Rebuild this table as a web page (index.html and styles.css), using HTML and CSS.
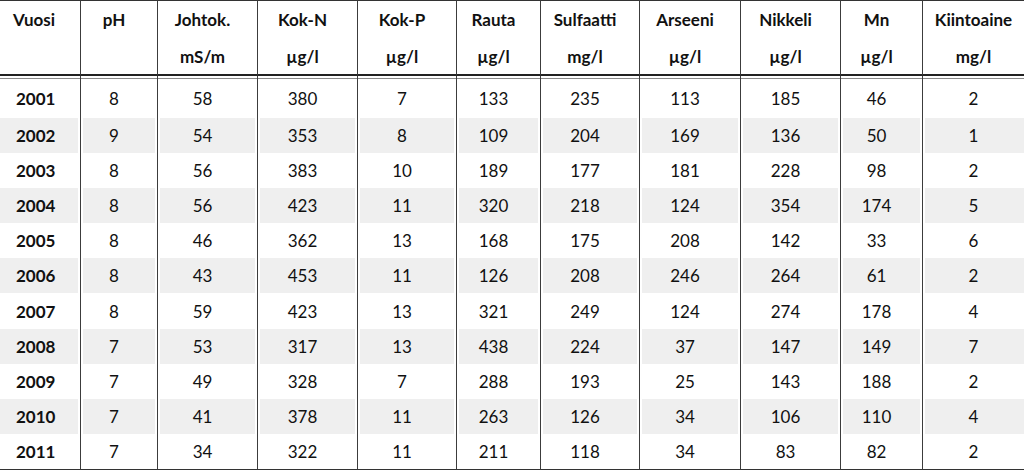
FILE: index.html
```html
<!DOCTYPE html>
<html lang="fi">
<head>
<meta charset="utf-8">
<title>Vedenlaatu</title>
<link rel="stylesheet" href="styles.css">
</head>
<body>
<table class="data">
  <colgroup>
    <col class="c1"><col class="c2"><col class="c3"><col class="c4"><col class="c5"><col class="c6"><col class="c7"><col class="c8"><col class="c9"><col class="c10"><col class="c11">
  </colgroup>
  <thead>
    <tr class="h1">
      <th class="first">Vuosi</th><th>pH</th><th>Johtok.</th><th>Kok-N</th><th>Kok-P</th><th>Rauta</th><th>Sulfaatti</th><th>Arseeni</th><th>Nikkeli</th><th>Mn</th><th class="last">Kiintoaine</th>
    </tr>
    <tr class="h2">
      <th class="first"></th><th></th><th>mS/m</th><th>µg/l</th><th>µg/l</th><th>µg/l</th><th>mg/l</th><th>µg/l</th><th>µg/l</th><th>µg/l</th><th class="last">mg/l</th>
    </tr>
  </thead>
  <tbody>
    <tr><td class="first">2001</td><td>8</td><td>58</td><td>380</td><td>7</td><td>133</td><td>235</td><td>113</td><td>185</td><td>46</td><td class="last">2</td></tr>
    <tr class="alt"><td class="first">2002</td><td>9</td><td>54</td><td>353</td><td>8</td><td>109</td><td>204</td><td>169</td><td>136</td><td>50</td><td class="last">1</td></tr>
    <tr><td class="first">2003</td><td>8</td><td>56</td><td>383</td><td>10</td><td>189</td><td>177</td><td>181</td><td>228</td><td>98</td><td class="last">2</td></tr>
    <tr class="alt"><td class="first">2004</td><td>8</td><td>56</td><td>423</td><td>11</td><td>320</td><td>218</td><td>124</td><td>354</td><td>174</td><td class="last">5</td></tr>
    <tr><td class="first">2005</td><td>8</td><td>46</td><td>362</td><td>13</td><td>168</td><td>175</td><td>208</td><td>142</td><td>33</td><td class="last">6</td></tr>
    <tr class="alt"><td class="first">2006</td><td>8</td><td>43</td><td>453</td><td>11</td><td>126</td><td>208</td><td>246</td><td>264</td><td>61</td><td class="last">2</td></tr>
    <tr><td class="first">2007</td><td>8</td><td>59</td><td>423</td><td>13</td><td>321</td><td>249</td><td>124</td><td>274</td><td>178</td><td class="last">4</td></tr>
    <tr class="alt"><td class="first">2008</td><td>7</td><td>53</td><td>317</td><td>13</td><td>438</td><td>224</td><td>37</td><td>147</td><td>149</td><td class="last">7</td></tr>
    <tr><td class="first">2009</td><td>7</td><td>49</td><td>328</td><td>7</td><td>288</td><td>193</td><td>25</td><td>143</td><td>188</td><td class="last">2</td></tr>
    <tr class="alt"><td class="first">2010</td><td>7</td><td>41</td><td>378</td><td>11</td><td>263</td><td>126</td><td>34</td><td>106</td><td>110</td><td class="last">4</td></tr>
    <tr><td class="first">2011</td><td>7</td><td>34</td><td>322</td><td>11</td><td>211</td><td>118</td><td>34</td><td>83</td><td>82</td><td class="last">2</td></tr>
  </tbody>
</table>
</body>
</html>
```
FILE: styles.css
```css
html, body {
  margin: 0;
  padding: 0;
  background: #ffffff;
}

.data {
  width: 1024px;
  table-layout: fixed;
  border-collapse: separate;
  border-spacing: 0;
  font-family: Lato, "Open Sans", sans-serif;
  font-size: 17px;
  color: #111111;
}

.c1 { width: 80px; }
.c2 { width: 77px; }
.c3 { width: 100px; }
.c4 { width: 100px; }
.c5 { width: 99px; }
.c6 { width: 84px; }
.c7 { width: 99px; }
.c8 { width: 101px; }
.c9 { width: 100px; }
.c10 { width: 82px; }
.c11 { width: 102px; }

.data th,
.data td {
  padding: 0 10px 0 0;
  text-align: center;
  vertical-align: middle;
  white-space: nowrap;
  border-left: 1px solid #3c3c3c;
  line-height: 1;
}

.data th {
  font-weight: 700;
  color: #111111;
}

.data .first {
  border-left: none;
  text-align: left;
  padding-left: 16px;
  font-weight: 700;
  color: #111111;
}

.data th.first {
  padding-left: 13px;
}

.data .last {
  padding-right: 0;
}

.h1 th {
  height: 37px;
  border-top: 1px solid #333333;
}

.h2 th {
  height: 36px;
  border-bottom: 2px solid #222222;
}

.data td {
  height: 35.1px;
}

.data tbody tr:first-child td {
  height: 39px;
  padding-top: 3px;
  box-shadow: inset 0 2px 0 #ffffff, inset 0 3px 0 #8a8a8a;
}

.data tbody tr:last-child td {
  border-bottom: 1px solid #333333;
}

.alt td {
  background-image: linear-gradient(#efefef, #efefef);
  background-repeat: no-repeat;
  background-position: 2px 0;
  background-size: calc(100% - 4px) 100%;
}

.alt td.first {
  background-position: 0 0;
  background-size: calc(100% - 2px) 100%;
}

.alt td.last {
  background-size: calc(100% - 2px) 100%;
}
```
